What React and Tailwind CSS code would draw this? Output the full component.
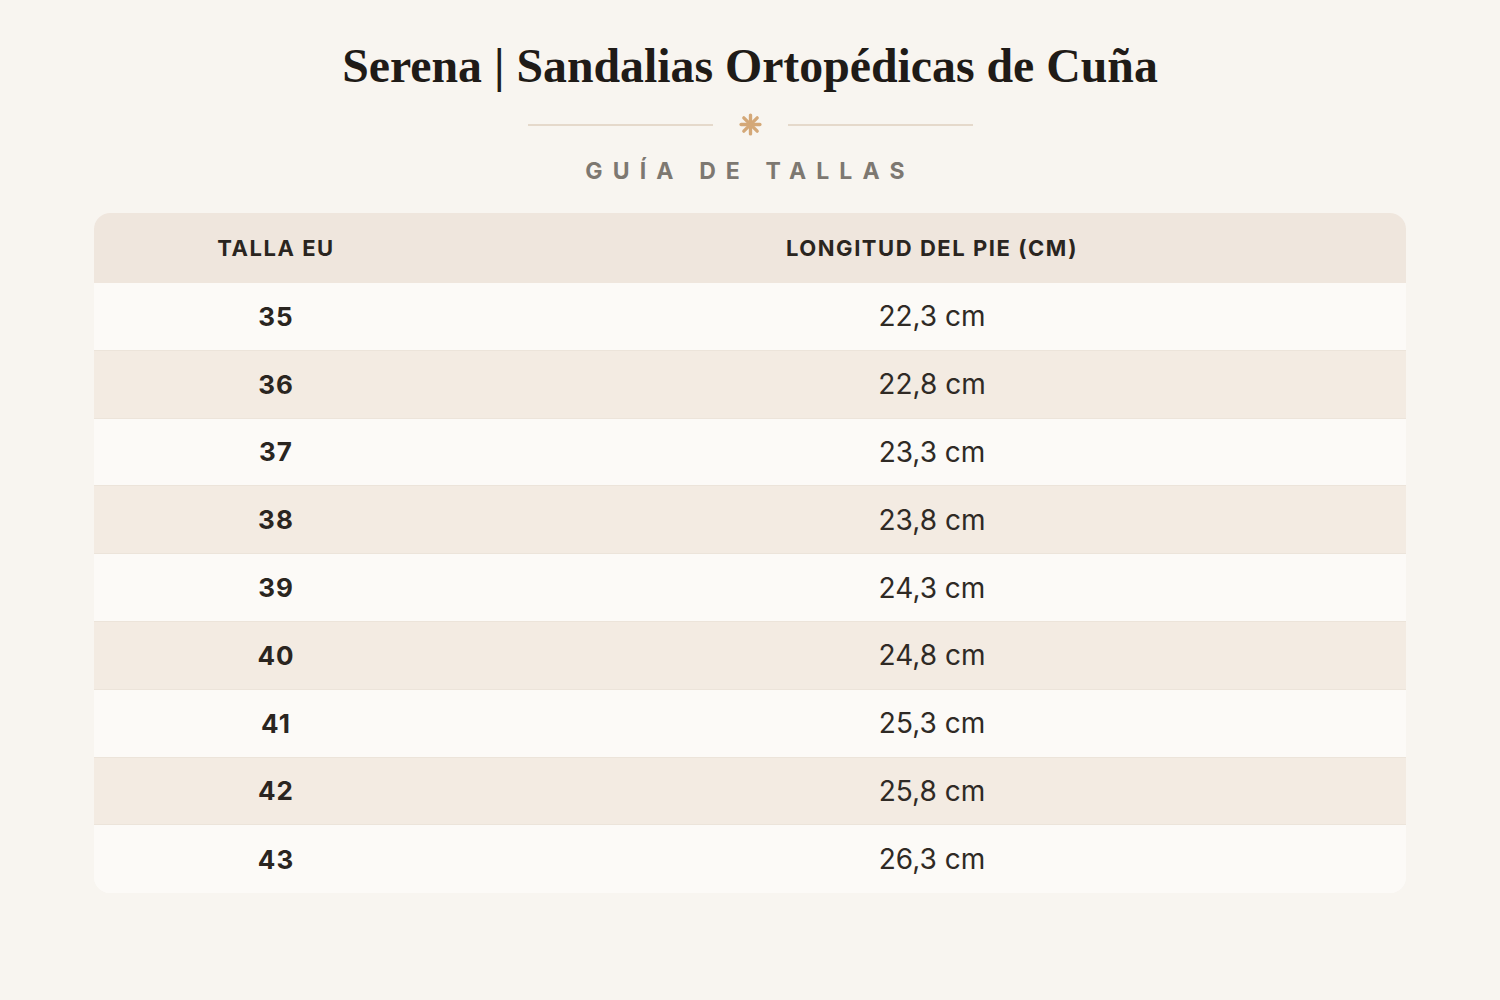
import React from "react";

const rows = [
  ["35", "22,3 cm"],
  ["36", "22,8 cm"],
  ["37", "23,3 cm"],
  ["38", "23,8 cm"],
  ["39", "24,3 cm"],
  ["40", "24,8 cm"],
  ["41", "25,3 cm"],
  ["42", "25,8 cm"],
  ["43", "26,3 cm"],
];

function Asterisk() {
  return (
    <svg width="23" height="23" viewBox="0 0 22 22" fill="none" stroke="#d4a878" strokeWidth="3.2" strokeLinecap="round">
      <line x1="11" y1="2" x2="11" y2="20" />
      <line x1="2" y1="11" x2="20" y2="11" />
      <line x1="4.6" y1="4.6" x2="17.4" y2="17.4" />
      <line x1="4.6" y1="17.4" x2="17.4" y2="4.6" />
    </svg>
  );
}

export default function App() {
  return (
    <div className="min-h-screen w-full bg-[#f8f5f0] flex flex-col items-center pt-[38px]" style={{ fontFamily: "Inter, 'Noto Sans', sans-serif" }}>
      <h1 className="text-[47.8px] leading-[56px] font-bold text-[#1f1b17]" style={{ fontFamily: "'Liberation Serif', 'Times New Roman', serif" }}>
        Serena | Sandalias Ortopédicas de Cuña
      </h1>
      <div className="mt-[19px] flex items-center gap-[26px]">
        <div className="w-[185px] h-[2px] bg-[#e5d9cb]" />
        <Asterisk />
        <div className="w-[185px] h-[2px] bg-[#e5d9cb]" />
      </div>
      <div className="mt-[21px] text-[23px] leading-[28px] font-bold tracking-[0.44em] text-[#7d7871]">
        GUÍA DE TALLAS
      </div>
      <div className="mt-[28px] w-[1312px] rounded-[16px] overflow-hidden bg-[#fcfaf7]">
        <div className="flex h-[70px] items-center bg-[#efe6dd] text-[22px] font-bold tracking-[0.07em] text-[#2a2520]">
          <div className="w-[364px] text-center">TALLA EU</div>
          <div className="flex-1 text-center">LONGITUD DEL PIE (CM)</div>
        </div>
        {rows.map(([size, len], i) => (
          <div
            key={size}
            className={
              "flex h-[67.8px] items-center text-[#2a2520] " +
              (i % 2 === 0 ? "bg-[#fcfaf7]" : "bg-[#f3ebe2]") +
              (i < rows.length - 1 ? " border-b border-[#ece4da]" : "")
            }
          >
            <div className="w-[364px] text-center text-[26px] font-bold tracking-[0.04em]">{size}</div>
            <div className="flex-1 text-center text-[28px] font-normal text-[#2f2a25]">{len}</div>
          </div>
        ))}
      </div>
    </div>
  );
}
